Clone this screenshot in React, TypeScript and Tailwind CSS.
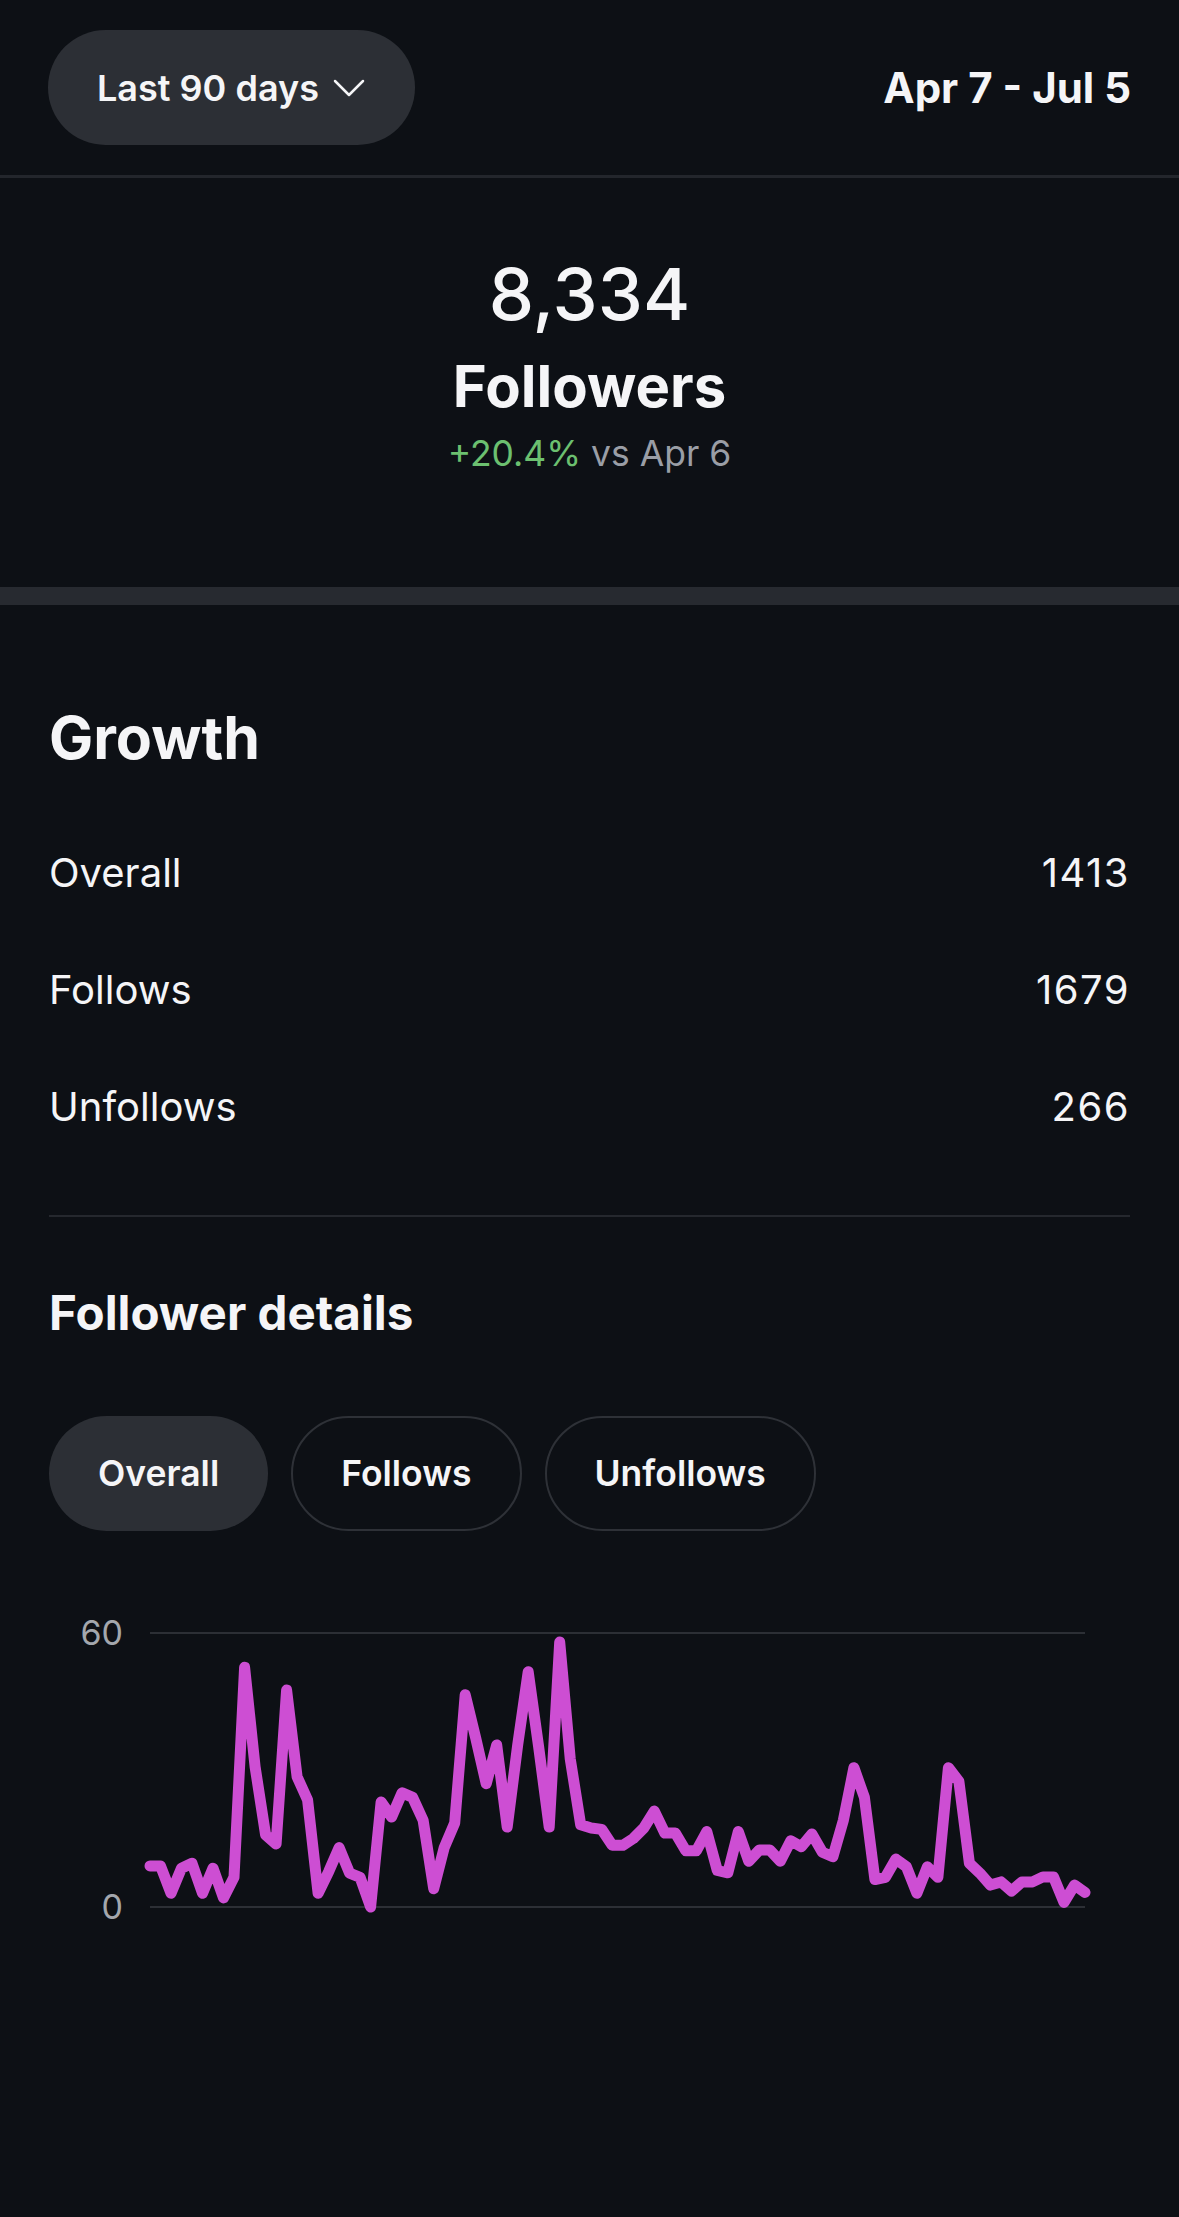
import React from 'react';

const data = [
  9, 9, 3, 8.5, 9.6, 3, 8.5, 2, 6.5, 52.5, 30.7, 15.8, 13.8, 47.5, 28.5, 23.4, 3, 7.7, 13, 7.4, 6.5, 0, 23, 19.7,
  25, 24, 19, 4, 13, 18.4, 46.5, 37, 27, 35.5, 17.5, 35.5, 51.5, 35, 17.5, 58, 32.5, 18, 17.3, 17, 13.5, 13.5, 15,
  17.3, 21, 16.2, 16.2, 12.3, 12.3, 16.5, 8, 7.5, 16.5, 10, 12.5, 12.5, 10, 14.5, 13.2, 16, 12, 11, 19, 30.5, 24, 6,
  6.5, 10.5, 8.8, 3, 8.8, 6.5, 30.5, 27.5, 9.6, 7.4, 4.8, 5.5, 3.5, 5.5, 5.5, 6.6, 6.6, 1, 4.8, 3.2,
];

const rows = [
  { label: 'Overall', value: '1413' },
  { label: 'Follows', value: '1679' },
  { label: 'Unfollows', value: '266' },
];

const FollowerChart = () => {
  const x0 = 150;
  const x1 = 1085;
  const yTop = 33;
  const yBottom = 307;
  const step = (x1 - x0) / (data.length - 1);
  const points = data
    .map((v, i) => `${(x0 + i * step).toFixed(1)},${(yBottom - (v / 60) * (yBottom - yTop)).toFixed(1)}`)
    .join(' ');

  return (
    <svg className="block w-full" viewBox="0 0 1179 340" height={340}>
      <line x1={x0} y1={yTop} x2={x1} y2={yTop} stroke="#2c2f35" strokeWidth="2" />
      <line x1={x0} y1={yBottom} x2={x1} y2={yBottom} stroke="#2c2f35" strokeWidth="2" />
      <text x="123" y={yTop + 12} textAnchor="end" fill="#a3a7ad" fontSize="34" fontFamily="Inter, sans-serif">
        60
      </text>
      <text x="123" y={yBottom + 12} textAnchor="end" fill="#a3a7ad" fontSize="34" fontFamily="Inter, sans-serif">
        0
      </text>
      <polyline
        points={points}
        fill="none"
        stroke="#cd4ed3"
        strokeWidth="11"
        strokeLinejoin="round"
        strokeLinecap="round"
      />
    </svg>
  );
};

const App = () => {
  return (
    <div className="min-h-screen bg-[#0d1015] text-[#f5f5f7] font-['Inter','Liberation_Sans',sans-serif]">
      {/* header */}
      <div className="h-[178px] flex items-center justify-between px-[48px] border-b-[3px] border-[#23262c]">
        <button className="h-[115px] rounded-full bg-[#2c2f35] pl-[49px] pr-[50px] flex items-center gap-[14px]">
          <span className="text-[36px] font-semibold leading-none">Last 90 days</span>
          <svg className="w-[32px] h-[18px]" viewBox="0 0 32 18" fill="none" stroke="currentColor" strokeWidth="2.5">
            <path d="M2 2l14 14L30 2" strokeLinecap="round" strokeLinejoin="round" />
          </svg>
        </button>
        <div className="text-[42px] font-bold leading-none">Apr 7 - Jul 5</div>
      </div>

      {/* total */}
      <div className="flex flex-col items-center pt-[80px] pb-[115px]">
        <div className="text-[72px] font-medium leading-none">8,334</div>
        <div className="mt-[27px] text-[58px] font-bold leading-none">Followers</div>
        <div className="mt-[21px] text-[35.5px] leading-none">
          <span className="text-[#6cc070]">+20.4%</span>
          <span className="text-[#9a9ea6]"> vs Apr 6</span>
        </div>
      </div>
      <div className="h-[18px] bg-[#272a30]" />

      {/* growth */}
      <div className="px-[49px] pt-[103px]">
        <h2 className="text-[59px] font-bold leading-none">Growth</h2>
        <div className="mt-[86px] flex flex-col gap-[77px]">
          {rows.map((r) => (
            <div key={r.label} className="flex items-center justify-between text-[40px] leading-none">
              <span>{r.label}</span>
              <span className="tracking-[1.5px]">{r.value}</span>
            </div>
          ))}
        </div>
        <div className="mt-[88px] h-[2px] bg-[#25282e]" />
        <h3 className="mt-[72px] text-[47.5px] font-bold leading-none">Follower details</h3>
        <div className="mt-[80px] flex gap-[23px]">
          <button className="h-[115px] px-[49px] rounded-full bg-[#2c2f35] text-[35.5px] font-semibold leading-none">
            Overall
          </button>
          <button className="h-[115px] px-[48px] rounded-full border-2 border-[#2e3137] text-[35.5px] font-semibold leading-none">
            Follows
          </button>
          <button className="h-[115px] px-[48px] rounded-full border-2 border-[#2e3137] text-[35.5px] font-semibold leading-none">
            Unfollows
          </button>
        </div>
      </div>

      <div className="mt-[69px]">
        <FollowerChart />
      </div>
    </div>
  );
};

export default App;
